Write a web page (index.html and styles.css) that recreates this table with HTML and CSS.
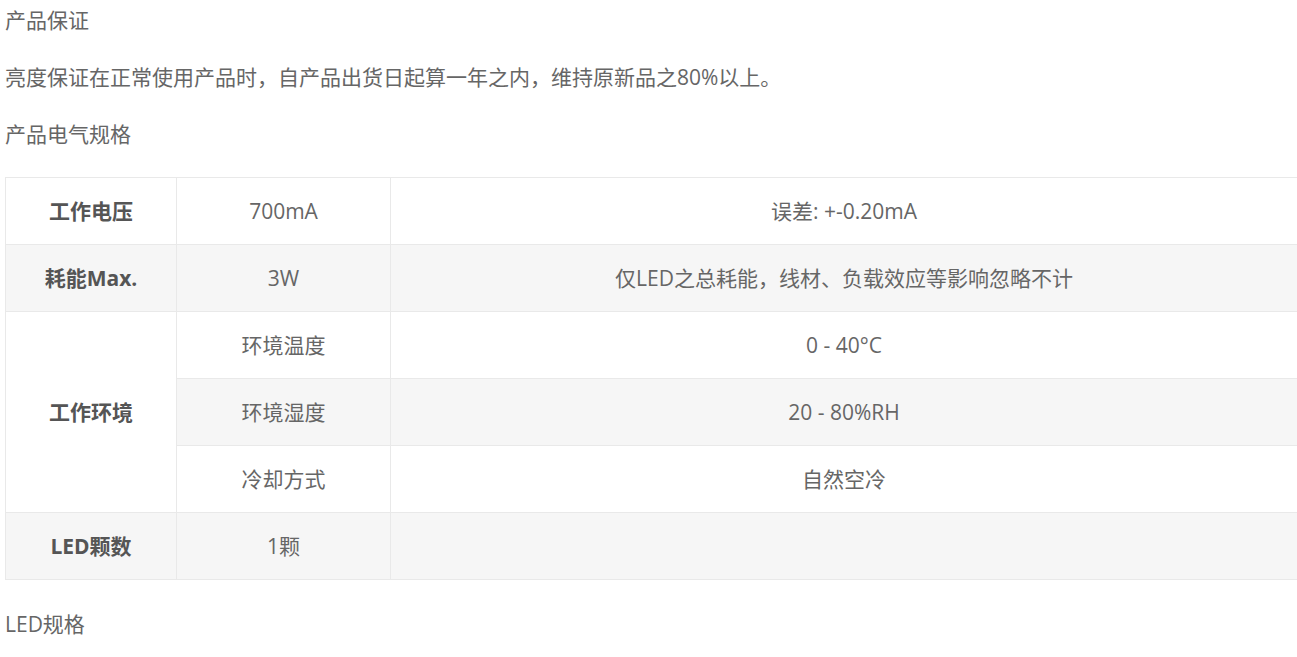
FILE: index.html
```html
<!DOCTYPE html>
<html lang="zh-CN">
<head>
<meta charset="utf-8">
<title>产品规格</title>
<link rel="stylesheet" href="styles.css">
</head>
<body>
<div class="page">
  <p class="para">产品保证</p>
  <p class="para">亮度保证在正常使用产品时，自产品出货日起算一年之内，维持原新品之80%以上。</p>
  <p class="para">产品电气规格</p>
  <table class="spec">
    <tr>
      <th class="c1">工作电压</th>
      <td class="c2">700mA</td>
      <td class="c3">误差: +-0.20mA</td>
    </tr>
    <tr class="alt">
      <th class="c1">耗能Max.</th>
      <td class="c2">3W</td>
      <td class="c3">仅LED之总耗能，线材、负载效应等影响忽略不计</td>
    </tr>
    <tr>
      <th class="c1 white" rowspan="3">工作环境</th>
      <td class="c2">环境温度</td>
      <td class="c3">0 - 40°C</td>
    </tr>
    <tr class="alt">
      <td class="c2">环境湿度</td>
      <td class="c3">20 - 80%RH</td>
    </tr>
    <tr>
      <td class="c2">冷却方式</td>
      <td class="c3">自然空冷</td>
    </tr>
    <tr class="alt">
      <th class="c1">LED颗数</th>
      <td class="c2">1颗</td>
      <td class="c3"></td>
    </tr>
  </table>
  <p class="para last">LED规格</p>
</div>
</body>
</html>
```

FILE: styles.css
```css
html, body {
  margin: 0;
  padding: 0;
  background: #ffffff;
  overflow: hidden;
}

.page {
  padding: 7px 0 0 5px;
  font-family: "Open Sans", "Noto Sans CJK SC", sans-serif;
  font-size: 21px;
  color: #666666;
}

.para {
  margin: 0 0 30px 0;
  line-height: 27px;
  height: 27px;
  white-space: nowrap;
}

.spec + .para,
.para.last {
  margin-top: 31px;
}

.spec {
  width: 1293px;
  border-collapse: collapse;
  table-layout: fixed;
  margin: -1px 0 0 0;
}

.spec th,
.spec td {
  border: 1px solid #e9e9e9;
  height: 66px;
  padding: 0;
  text-align: center;
  vertical-align: middle;
  font-size: 21px;
  line-height: 27px;
  color: #666666;
  font-weight: normal;
}

.spec th {
  font-weight: bold;
  color: #555555;
}

.spec .c1 { width: 170px; }
.spec .c2 { width: 213px; }

.spec tr.alt th,
.spec tr.alt td {
  background: #f6f6f6;
}

.spec th.white {
  background: #ffffff;
}
```
